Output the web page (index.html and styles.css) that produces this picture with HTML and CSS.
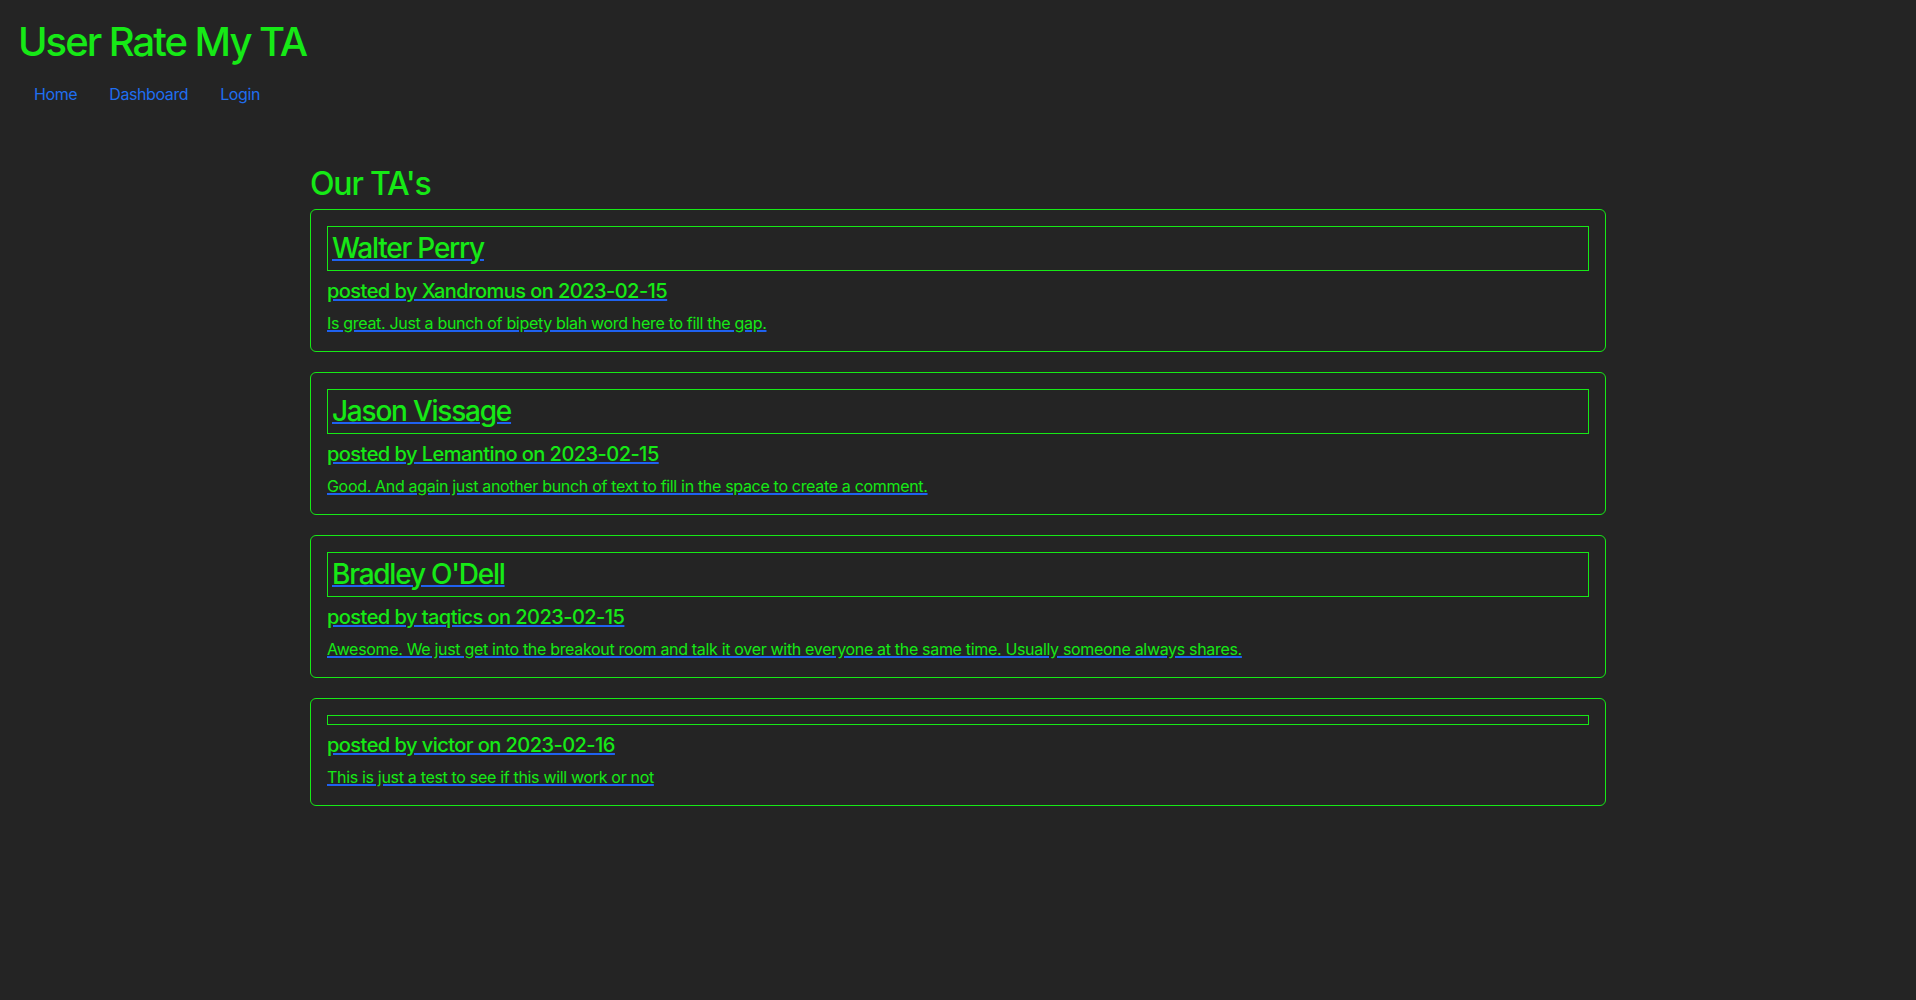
FILE: index.html
```html
<!DOCTYPE html>
<html lang="en">
<head>
<meta charset="utf-8">
<title>User Rate My TA</title>
<link rel="stylesheet" href="styles.css">
</head>
<body>
<header class="site-header">
  <h1 class="site-title">User Rate My TA</h1>
  <nav class="site-nav">
    <a class="nav-link" href="#">Home</a>
    <a class="nav-link" href="#">Dashboard</a>
    <a class="nav-link" href="#">Login</a>
  </nav>
</header>
<main class="container">
  <h2 class="section-title">Our TA's</h2>
  <div class="ta-card">
    <a class="ta-link" href="#">
      <div class="ta-name-box"><h3 class="ta-name">Walter Perry</h3></div>
      <h5 class="ta-meta">posted by Xandromus on 2023-02-15</h5>
      <p class="ta-comment">Is great. Just a bunch of bipety blah word here to fill the gap.</p>
    </a>
  </div>
  <div class="ta-card">
    <a class="ta-link" href="#">
      <div class="ta-name-box"><h3 class="ta-name">Jason Vissage</h3></div>
      <h5 class="ta-meta">posted by Lemantino on 2023-02-15</h5>
      <p class="ta-comment">Good. And again just another bunch of text to fill in the space to create a comment.</p>
    </a>
  </div>
  <div class="ta-card">
    <a class="ta-link" href="#">
      <div class="ta-name-box"><h3 class="ta-name">Bradley O'Dell</h3></div>
      <h5 class="ta-meta">posted by taqtics on 2023-02-15</h5>
      <p class="ta-comment">Awesome. We just get into the breakout room and talk it over with everyone at the same time. Usually someone always shares.</p>
    </a>
  </div>
  <div class="ta-card">
    <a class="ta-link" href="#">
      <div class="ta-name-box"><h3 class="ta-name"></h3></div>
      <h5 class="ta-meta">posted by victor on 2023-02-16</h5>
      <p class="ta-comment">This is just a test to see if this will work or not</p>
    </a>
  </div>
</main>
</body>
</html>
```

FILE: styles.css
```css
html, body {
  margin: 0;
  padding: 0;
}
body {
  background: #242424;
  color: #16e916;
  font-family: Inter, "Noto Sans", sans-serif;
  font-size: 16px;
  line-height: 1.5;
  min-height: 1000px;
}
.site-header {
  padding: 18px 18px 0 18px;
}
.site-title {
  margin: 0 0 8px 0;
  font-size: 40px;
  font-weight: 500;
  line-height: 1.2;
  color: #16e916;
  letter-spacing: -0.05em;
}
.site-nav {
  display: flex;
}
.nav-link {
  display: block;
  padding: 8px 16px;
  color: #1f6ef0;
  text-decoration: none;
  font-size: 16px;
  line-height: 24px;
  letter-spacing: -0.025em;
}
.container {
  max-width: 1296px;
  margin: 51px auto 0 auto;
  padding: 0 12px;
}
.section-title {
  margin: 0 0 6px 0;
  font-size: 32px;
  font-weight: 500;
  line-height: 1.2;
  color: #16e916;
  letter-spacing: -0.037em;
}
.ta-card {
  border: 1px solid #16e916;
  border-radius: 6px;
  padding: 16px;
  margin-bottom: 20px;
}
.ta-link {
  display: block;
  color: #1f62f0;
  text-decoration: underline;
  text-decoration-thickness: 2px;
}
.ta-name-box {
  border: 1px solid #16e916;
  padding: 4px;
  margin-bottom: 8px;
}
.ta-name {
  margin: 0;
  font-size: 28px;
  font-weight: 500;
  line-height: 35px;
  color: #16e916;
  letter-spacing: -0.044em;
}
.ta-meta {
  margin: 0 0 8px 0;
  font-size: 20px;
  font-weight: 500;
  line-height: 24px;
  color: #16e916;
  letter-spacing: -0.027em;
}
.ta-comment {
  margin: 0;
  font-size: 16px;
  line-height: 24px;
  color: #16e916;
  letter-spacing: -0.02em;
}
```
